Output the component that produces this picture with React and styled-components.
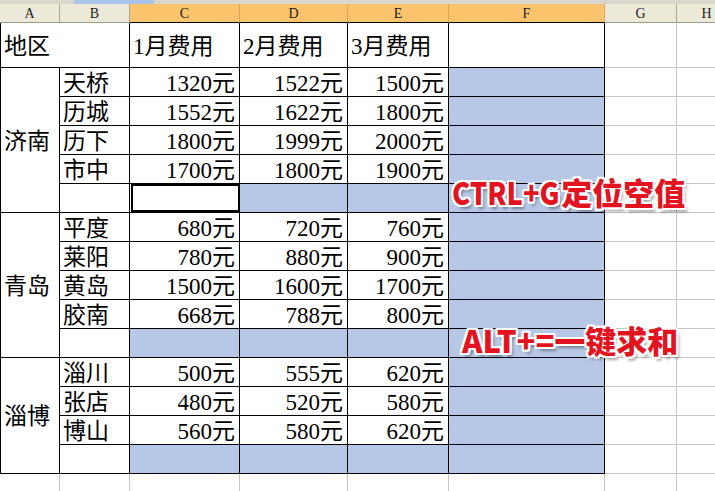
import React from "react";
import styled, { createGlobalStyle, css } from "styled-components";

const Global = createGlobalStyle`
  html, body { margin: 0; padding: 0; background: #fff; }
  body { width: 715px; height: 491px; overflow: hidden; }
`;

const BLUE = "#b6c8e6";
const GRID = "#c6c6c6";

const Page = styled.div`
  position: relative;
  width: 715px;
  height: 491px;
  overflow: hidden;
  background: #fff;
`;

const TopStrip = styled.div`
  display: flex;
  height: 4px;
  background: #d9d6cc;
`;

const StripTab = styled.div`
  margin-left: 74px;
  width: 80px;
  background: #a9c3ea;
`;

const Sheet = styled.div`
  display: grid;
  grid-template-columns: 60px 70px 110px 108px 101px 156px 72px 60px;
  grid-template-rows: 19px 45px repeat(14, 29px) 30px;
  grid-auto-flow: row;
`;

const ColHead = styled.div`
  box-sizing: border-box;
  display: flex;
  align-items: center;
  justify-content: center;
  font-family: "Liberation Serif", serif;
  font-size: 14px;
  color: #222;
  background: ${(p) => (p.$on ? "#fbc46d" : "#ece9d8")};
  border-right: 1px solid ${(p) => (p.$on ? "#e1a55a" : "#aca899")};
  border-bottom: 1px solid ${(p) => (p.$on ? "#000" : "#9e9b8c")};
  padding-top: 1px;
`;

const Cell = styled.div`
  position: relative;
  box-sizing: border-box;
  display: flex;
  align-items: center;
  justify-content: ${(p) => (p.$right ? "flex-end" : "flex-start")};
  padding: ${(p) => (p.$right ? "2px 4px 0 0" : "2px 0 0 3px")};
  font-family: "Liberation Serif", "Noto Sans CJK SC", serif;
  font-size: 23px;
  line-height: 1;
  color: #000;
  white-space: nowrap;
  background: ${(p) => (p.$blue ? BLUE : "#fff")};
  border-right: 1px solid ${(p) => (p.$grid ? GRID : "#000")};
  border-bottom: 1px solid ${(p) => (p.$grid ? GRID : "#000")};
  ${(p) => p.$first && css`border-left: 1px solid #000;`}
  ${(p) => p.$cols && css`grid-column: span ${p.$cols};`}
  ${(p) => p.$rows && css`grid-row: span ${p.$rows};`}
  ${(p) =>
    p.$active &&
    css`
      &::after {
        content: "";
        position: absolute;
        left: 1px;
        top: 0;
        right: -1px;
        bottom: 0;
        border: 2px solid #000;
      }
    `}
`;

const Note = styled.div`
  position: absolute;
  left: ${(p) => p.$x}px;
  top: ${(p) => p.$y}px;
  font-family: "Noto Sans CJK SC", "Liberation Sans", sans-serif;
  font-weight: 900;
  font-size: ${(p) => p.$size}px;
  line-height: 1;
  color: #e3141f;
  white-space: nowrap;
  text-shadow:
    2px 0 0 #fff, -2px 0 0 #fff, 0 2px 0 #fff, 0 -2px 0 #fff,
    2px 2px 0 #fff, -2px -2px 0 #fff, 2px -2px 0 #fff, -2px 2px 0 #fff,
    3px 4px 3px rgba(0, 0, 0, 0.35);
`;

const Latin = styled.span`
  display: inline-block;
  letter-spacing: ${(p) => p.$ls || 0}px;
  transform: scaleX(${(p) => p.$sx || 1});
  transform-origin: left center;
  margin-right: ${(p) => p.$mr || 0}px;
`;

const groups = [
  {
    name: "济南",
    rows: [
      ["天桥", 1320, 1522, 1500],
      ["历城", 1552, 1622, 1800],
      ["历下", 1800, 1999, 2000],
      ["市中", 1700, 1800, 1900],
    ],
    active: true,
  },
  {
    name: "青岛",
    rows: [
      ["平度", 680, 720, 760],
      ["莱阳", 780, 880, 900],
      ["黄岛", 1500, 1600, 1700],
      ["胶南", 668, 788, 800],
    ],
  },
  {
    name: "淄博",
    rows: [
      ["淄川", 500, 555, 620],
      ["张店", 480, 520, 580],
      ["博山", 560, 580, 620],
    ],
  },
];

const letters = ["A", "B", "C", "D", "E", "F", "G", "H"];

export default function App() {
  const cells = [];
  letters.forEach((l, i) =>
    cells.push(
      <ColHead key={"h" + l} $on={i >= 2 && i <= 5}>
        {l}
      </ColHead>
    )
  );
  cells.push(
    <Cell key="r1a" $cols={2} $first>
      地区
    </Cell>,
    <Cell key="r1c">1月费用</Cell>,
    <Cell key="r1d">2月费用</Cell>,
    <Cell key="r1e">3月费用</Cell>,
    <Cell key="r1f" />,
    <Cell key="r1g" $grid />,
    <Cell key="r1h" $grid />
  );
  groups.forEach((g, gi) => {
    g.rows.forEach((r, ri) => {
      if (ri === 0)
        cells.push(
          <Cell key={`g${gi}`} $rows={g.rows.length + 1} $first>
            {g.name}
          </Cell>
        );
      cells.push(
        <Cell key={`g${gi}r${ri}b`}>{r[0]}</Cell>,
        <Cell key={`g${gi}r${ri}c`} $right>{r[1]}元</Cell>,
        <Cell key={`g${gi}r${ri}d`} $right>{r[2]}元</Cell>,
        <Cell key={`g${gi}r${ri}e`} $right>{r[3]}元</Cell>,
        <Cell key={`g${gi}r${ri}f`} $blue />,
        <Cell key={`g${gi}r${ri}g`} $grid />,
        <Cell key={`g${gi}r${ri}h`} $grid />
      );
    });
    cells.push(
      <Cell key={`g${gi}sb`} />,
      <Cell key={`g${gi}sc`} $blue={!g.active} $active={g.active} />,
      <Cell key={`g${gi}sd`} $blue />,
      <Cell key={`g${gi}se`} $blue />,
      <Cell key={`g${gi}sf`} $blue />,
      <Cell key={`g${gi}sg`} $grid />,
      <Cell key={`g${gi}sh`} $grid />
    );
  });
  letters.forEach((l) => cells.push(<Cell key={"z" + l} $grid />));

  return (
    <Page>
      <Global />
      <TopStrip>
        <StripTab />
      </TopStrip>
      <Sheet>{cells}</Sheet>
      <Note $x={452} $y={176} $size={31}>
        <Latin $sx={0.88} $mr={-13}>CTRL+G</Latin>定位空值
      </Note>
      <Note $x={462} $y={324} $size={31}>
        <Latin $mr={0}>ALT+=</Latin>一键求和
      </Note>
    </Page>
  );
}
